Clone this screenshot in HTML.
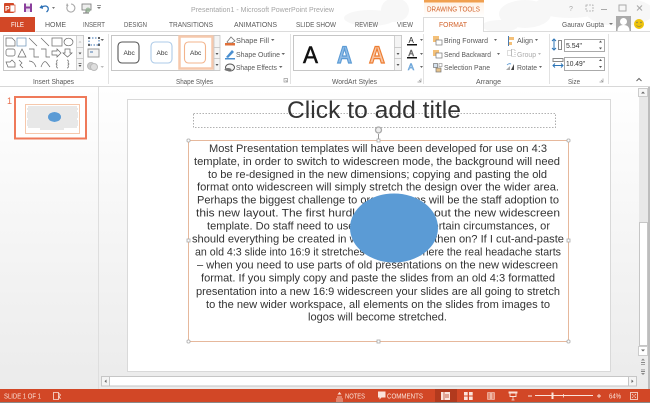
<!DOCTYPE html>
<html><head><meta charset="utf-8"><style>
html,body{margin:0;padding:0;background:#fff;width:650px;height:403px;overflow:hidden}
svg{display:block;position:absolute;left:0;top:0}
text{font-family:"Liberation Sans",sans-serif}
.t{font-size:7.6px;fill:#5a5a5a}
.b{font-size:11.2px;fill:#333}
</style></head><body>
<svg width="650" height="403" viewBox="0 0 650 403" xmlns="http://www.w3.org/2000/svg">
<defs><linearGradient id="bg" x1="0" y1="0" x2="0" y2="1"><stop offset="0" stop-color="#fff"/><stop offset="1" stop-color="#ebebeb"/></linearGradient>
<linearGradient id="tab" x1="0" y1="0" x2="0" y2="1"><stop offset="0" stop-color="#fff0e2"/><stop offset="1" stop-color="#fff"/></linearGradient></defs>
<rect width="650" height="403" fill="#fff"/>
<!-- cloud pattern -->
<g fill="#f7f7f7"><ellipse cx="370" cy="18" rx="26" ry="8"/><ellipse cx="395" cy="10" rx="14" ry="12"/><ellipse cx="525" cy="14" rx="26" ry="14"/><ellipse cx="570" cy="6" rx="36" ry="12"/><ellipse cx="620" cy="12" rx="34" ry="14"/><ellipse cx="500" cy="26" rx="18" ry="6"/></g>
<!-- QAT -->
<rect x="4" y="3" width="10" height="10" rx="1" fill="#d24726"/><rect x="10" y="5" width="5" height="7" fill="#fff" stroke="#d24726" stroke-width=".7"/><text x="5" y="11" font-size="7" font-weight="bold" fill="#fff">P</text>
<rect x="24" y="3.5" width="8" height="8.5" fill="#8a3f9c"/><rect x="26" y="3.5" width="4" height="3" fill="#eee"/><rect x="26" y="8.5" width="4" height="3.5" fill="#e8d8ee"/>
<path d="M42 5.5 l-1.5 2 2.5 .8 M41 7.5 q5 -3 7 0 q1 2.500 -1.500 4.500" fill="none" stroke="#2b6fb5" stroke-width="1.300"/><path d="M52 7h3l-1.500 2z" fill="#777"/>
<path d="M71 4a4 4 0 1 1 -3 1.200" fill="none" stroke="#aaa" stroke-width="1.100"/><path d="M67 3l1.500 2.500-2.500 .5z" fill="#aaa"/>
<rect x="82" y="4" width="9" height="6" fill="#eee" stroke="#777" stroke-width=".8"/><path d="M86 10v3M83 13h6" stroke="#777"/><circle cx="88" cy="10" r="2.500" fill="#8a8" opacity=".7"/>
<path d="M97 7h4l-2 2z M97 5h4v.7h-4z" fill="#777"/>
<text x="191" y="12" font-size="7.6" fill="#a5a5a5" textLength="143" lengthAdjust="spacingAndGlyphs">Presentation1 - Microsoft PowerPoint Preview</text>
<!-- drawing tools -->
<rect x="424" y="0" width="60" height="17" fill="url(#tab)"/><rect x="424" y="0" width="60" height="2.500" fill="#f0a050"/>
<text x="427" y="11.500" font-size="7.6" fill="#d2622a" textLength="53" lengthAdjust="spacingAndGlyphs">DRAWING TOOLS</text>
<!-- window controls -->
<text x="569" y="11" font-size="7" fill="#aaa">?</text>
<rect x="586" y="5" width="7" height="6" fill="none" stroke="#aaa" stroke-width=".8" stroke-dasharray="2 1"/>
<rect x="601" y="9" width="6" height="1" fill="#aaa"/><rect x="619" y="5" width="7" height="6" fill="none" stroke="#aaa"/>
<path d="M637 5.500l5 5M642 5.500l-5 5" stroke="#aaa" stroke-width="1.100"/>
<!-- tabs -->
<rect x="0" y="17" width="35" height="15" fill="#d24726"/>
<text x="11" y="27" font-size="7.6" fill="#fff" textLength="13" lengthAdjust="spacingAndGlyphs">FILE</text>
<g>
<text class="t" x="45" y="27" textLength="21" lengthAdjust="spacingAndGlyphs">HOME</text>
<text class="t" x="83" y="27" textLength="22" lengthAdjust="spacingAndGlyphs">INSERT</text>
<text class="t" x="124" y="27" textLength="23" lengthAdjust="spacingAndGlyphs">DESIGN</text>
<text class="t" x="169" y="27" textLength="44" lengthAdjust="spacingAndGlyphs">TRANSITIONS</text>
<text class="t" x="234" y="27" textLength="43" lengthAdjust="spacingAndGlyphs">ANIMATIONS</text>
<text class="t" x="296" y="27" textLength="40" lengthAdjust="spacingAndGlyphs">SLIDE SHOW</text>
<text class="t" x="355" y="27" textLength="23" lengthAdjust="spacingAndGlyphs">REVIEW</text>
<text class="t" x="397" y="27" textLength="16" lengthAdjust="spacingAndGlyphs">VIEW</text>
</g>
<path d="M35.500 31.500H423.500V17.500H483.500V31.500H650" fill="none" stroke="#dcdcdc"/>
<rect x="424" y="18" width="59" height="15" fill="#fff"/>
<text x="439" y="27" font-size="7.6" fill="#d2622a" textLength="28" lengthAdjust="spacingAndGlyphs">FORMAT</text>
<text x="562" y="27" class="t" textLength="42" lengthAdjust="spacingAndGlyphs">Gaurav Gupta</text><path d="M609 23h4l-2 2z" fill="#777"/>
<rect x="616" y="16" width="15" height="15" fill="#aaa"/><circle cx="623.500" cy="21.500" r="3.500" fill="#fff"/><path d="M617.500 31q0-6 6-6t6 6z" fill="#fff"/>
<circle cx="639" cy="24" r="5" fill="#eec30a"/><circle cx="637" cy="22.500" r=".7" fill="#775"/><circle cx="641" cy="22.500" r=".7" fill="#775"/><path d="M636.500 25.500q2.500 2 5 0" fill="none" stroke="#775" stroke-width=".6"/>
<!-- Insert shapes gallery -->
<rect x="3.500" y="35.500" width="80" height="35" fill="#fff" stroke="#c6c6c6"/>
<g fill="none" stroke="#666" stroke-width=".7">
<path d="M6 38h6l3 3v5H6z"/><rect x="17" y="38" width="9" height="8" stroke="#6a8fb5"/>
<path d="M29 38l8 8M41 38l8 8"/><rect x="52" y="38" width="10" height="8"/><ellipse cx="68.500" cy="42" rx="4.500" ry="3.800"/>
<rect x="6" y="49" width="9" height="7" rx="2"/><path d="M18 57l4-8 4 8z"/><path d="M29 49h5v8h5M41 49h5v8h4"/><path d="M52 51h5v-2l4 4-4 4v-2h-5z"/><path d="M65 49h5v4h2l-4.500 4-4.500-4h2z"/>
<path d="M6 62h4l2-2 3 3v4H8z"/><path d="M19 60l3 3-2 2 3 3"/><path d="M29 61q5 0 7 6"/><path d="M41 67q3-8 6-4t3 4"/><path d="M58 60q-2 0-1 3l-1 1 1 1q-1 3 1 3"/><path d="M67 60q2 0 1 3l1 1-1 1q1 3-1 3"/>
</g>
<g fill="#f4f4f4" stroke="#c6c6c6" stroke-width=".8"><rect x="76.500" y="35.500" width="7" height="12"/><rect x="76.500" y="47.500" width="7" height="11"/><rect x="76.500" y="58.500" width="7" height="12"/></g>
<path d="M78.500 42.500h3l-1.500-1.500z" fill="#bbb"/><path d="M78.500 52.500h3l-1.500 2z" fill="#555"/><path d="M78.500 63h3v.7h-3zM78.500 65h3l-1.500 2z" fill="#555"/>
<rect x="89" y="38" width="10" height="7" fill="none" stroke="#3a70b0" stroke-dasharray="1.500 1.500"/><circle cx="89" cy="38" r="1" fill="#333"/><circle cx="99" cy="38" r="1" fill="#333"/><circle cx="89" cy="45" r="1" fill="#333"/><circle cx="99" cy="45" r="1" fill="#333"/><path d="M100.500 39h3.500l-1.750 2z" fill="#666"/>
<rect x="88" y="49" width="11" height="8" fill="#f3f3f3" stroke="#999"/><path d="M90 52h3" stroke="#4a7ab0"/>
<circle cx="91" cy="66" r="3.500" fill="#ccc" stroke="#bbb"/><circle cx="94" cy="67" r="3.500" fill="#ddd" stroke="#bbb"/>
<path d="M100.500 66h3.500l-1.750 2z" fill="#bbb"/>
<text x="33" y="84" class="t" textLength="41" lengthAdjust="spacingAndGlyphs">Insert Shapes</text>
<path d="M108.500 34v50M290.500 34v50M423.500 34v50M549.500 34v50M608.500 34v50" stroke="#e2e2e2"/>
<!-- Shape styles -->
<rect x="111.500" y="35.500" width="108" height="35" fill="#fff" stroke="#c6c6c6"/>
<rect x="118" y="42" width="21" height="21" rx="4" fill="#fff" stroke="#555" stroke-width="1.100"/>
<rect x="151" y="42" width="21" height="21" rx="4" fill="#fff" stroke="#aecbe8" stroke-width="1.100"/>
<rect x="179.500" y="36.500" width="33" height="32" fill="#fff" stroke="#f6c8ac" stroke-width="2.500"/>
<rect x="184.500" y="42" width="21" height="21" rx="4" fill="#fff" stroke="#f3b48c" stroke-width="1.100"/>
<g fill="#333"><text x="123.500" y="55" font-size="6.500">Abc</text><text x="156.500" y="55" font-size="6.500">Abc</text><text x="190" y="55" font-size="6.500">Abc</text></g>
<g fill="#f4f4f4" stroke="#c6c6c6" stroke-width=".8"><rect x="214" y="35.500" width="6" height="12"/><rect x="214" y="47.500" width="6" height="11"/><rect x="214" y="58.500" width="6" height="12"/></g>
<path d="M215.500 53h3l-1.500 2z M215.500 64h3l-1.500 2z" fill="#555"/>
<path d="M227 42l4-5 4 4-3 2h-4z" fill="#fff" stroke="#777" stroke-width=".8"/><rect x="225" y="43" width="10" height="2.500" fill="#e0703a"/>
<path d="M226 57l6-7 2 2-6 6z" fill="#4a8fd0"/><rect x="225" y="58" width="10" height="1.500" fill="#4a8fd0"/>
<ellipse cx="230" cy="67.500" rx="4.500" ry="3.500" fill="#f6f6f6" stroke="#555"/><ellipse cx="228" cy="69.500" rx="3.500" ry="1.500" fill="#777"/>
<text x="236" y="43" class="t" textLength="33" lengthAdjust="spacingAndGlyphs">Shape Fill</text><path d="M271 39h3.500l-1.750 2z" fill="#666"/>
<text x="236" y="57" class="t" textLength="44" lengthAdjust="spacingAndGlyphs">Shape Outline</text><path d="M281.500 53h3.500l-1.750 2z" fill="#666"/>
<text x="236" y="70" class="t" textLength="41" lengthAdjust="spacingAndGlyphs">Shape Effects</text><path d="M279 66h3.500l-1.750 2z" fill="#666"/>
<text x="176" y="84" class="t" textLength="37" lengthAdjust="spacingAndGlyphs">Shape Styles</text>
<path d="M284 78.500h3.500v3.500h-3.500zM285.500 80l2 2" fill="none" stroke="#999" stroke-width=".7"/>
<!-- WordArt -->
<rect x="293.500" y="35.500" width="108" height="35" fill="#fff" stroke="#c6c6c6"/>
<text x="303" y="63" font-size="24" fill="#111" stroke="#111" stroke-width=".5" textLength="15" lengthAdjust="spacingAndGlyphs">A</text>
<text x="337" y="63" font-size="24" fill="#8fbbe6" stroke="#5b9bd5" stroke-width="1.200" font-weight="bold" textLength="15" lengthAdjust="spacingAndGlyphs">A</text>
<text x="369" y="63" font-size="24" fill="#f8c4a2" stroke="#ed7d31" stroke-width="1.200" font-weight="bold" textLength="16" lengthAdjust="spacingAndGlyphs">A</text>
<g fill="#f4f4f4" stroke="#c6c6c6" stroke-width=".8"><rect x="394.500" y="35.500" width="7" height="12"/><rect x="394.500" y="47.500" width="7" height="11"/><rect x="394.500" y="58.500" width="7" height="12"/></g>
<path d="M396.500 53h3l-1.500 2z M396.500 64h3l-1.500 2z" fill="#555"/>
<text x="408.500" y="43" font-size="8" fill="#222">A</text><rect x="407" y="44" width="10" height="1.500" fill="#111"/>
<text x="408.500" y="56" font-size="8" fill="#fff" stroke="#666" stroke-width=".6">A</text><rect x="407" y="57" width="10" height="1.500" fill="#111"/>
<text x="408" y="70" font-size="9" fill="#dbe8f5" stroke="#5b9bd5" stroke-width=".6">A</text>
<path d="M420 39h3l-1.500 2zM420 53h3l-1.500 2zM420 66h3l-1.500 2z" fill="#666"/>
<text x="332" y="84" class="t" textLength="45" lengthAdjust="spacingAndGlyphs">WordArt Styles</text>
<path d="M421 78.500v3.500h-3.500M419 80l2 2" fill="none" stroke="#999" stroke-width=".7"/>
<!-- Arrange -->
<rect x="433" y="36" width="6" height="6" fill="#f4c078"/><rect x="436" y="40" width="6" height="5" fill="#fff" stroke="#777" stroke-width=".7"/>
<rect x="433" y="50" width="6" height="6" fill="#f4c078"/><rect x="436" y="53" width="6" height="5" fill="#fff" stroke="#777" stroke-width=".7"/>
<rect x="433.500" y="63.500" width="4" height="4" fill="#d5e2ee" stroke="#777" stroke-width=".7"/><rect x="439" y="63.500" width="3" height="3" fill="none" stroke="#999" stroke-width=".7"/><rect x="436" y="68" width="5" height="4" fill="#e6c38c" stroke="#777" stroke-width=".7"/>
<text x="444" y="43" class="t" textLength="44" lengthAdjust="spacingAndGlyphs">Bring Forward</text><path d="M494 39h3l-1.500 2z" fill="#666"/>
<text x="444" y="57" class="t" textLength="47" lengthAdjust="spacingAndGlyphs">Send Backward</text><path d="M497 53h3l-1.500 2z" fill="#666"/>
<text x="444" y="70" class="t" textLength="46" lengthAdjust="spacingAndGlyphs">Selection Pane</text>
<path d="M508.500 36v10" stroke="#4a7ab0"/><rect x="509" y="37" width="5" height="3" fill="#f4c078"/><rect x="509" y="42" width="3" height="3" fill="#f4c078"/>
<text x="517" y="43" class="t" textLength="16" lengthAdjust="spacingAndGlyphs">Align</text><path d="M535 39h3l-1.500 2z" fill="#666"/>
<rect x="507.500" y="50.500" width="4" height="5" fill="none" stroke="#bbb" stroke-dasharray="1 1"/><rect x="511.500" y="49.500" width="3.500" height="7" fill="none" stroke="#bbb" stroke-dasharray="1 1"/>
<text x="517" y="57" font-size="7.6" fill="#aaa" textLength="19" lengthAdjust="spacingAndGlyphs">Group</text><path d="M538 53h3l-1.500 2z" fill="#bbb"/>
<path d="M506 70l4-4v4z" fill="#aaa"/><path d="M511 70l3-6v6z" fill="#444"/><path d="M507 65q2-2 4-1" fill="none" stroke="#4a8fd0" stroke-width=".8"/>
<text x="517" y="70" class="t" textLength="20" lengthAdjust="spacingAndGlyphs">Rotate</text><path d="M539 66h3l-1.500 2z" fill="#666"/>
<text x="476" y="84" class="t" textLength="25" lengthAdjust="spacingAndGlyphs">Arrange</text>
<!-- Size -->
<path d="M554 39v11M552 41l2-2 2 2M552 48l2 2 2-2" fill="none" stroke="#2e75b6"/><rect x="558.500" y="40.500" width="3" height="9" fill="#fff" stroke="#888"/>
<rect x="553" y="58.500" width="10" height="3" fill="#fff" stroke="#888"/><path d="M553 65.500h10M555 63.500l-2 2 2 2M561 63.500l2 2-2 2" fill="none" stroke="#2e75b6"/>
<rect x="564.500" y="39.500" width="40" height="12" fill="#fff" stroke="#aaa"/><rect x="564.500" y="57.500" width="40" height="13" fill="#fff" stroke="#aaa"/>
<text x="566" y="48" font-size="7.6" fill="#333" textLength="16" lengthAdjust="spacingAndGlyphs">5.54"</text>
<text x="566" y="66" font-size="7.6" fill="#333" textLength="19" lengthAdjust="spacingAndGlyphs">10.49"</text>
<path d="M599 42.500h3l-1.500-2zM599 47.500h3l-1.500 2zM599 61h3l-1.500-2zM599 66h3l-1.500 2z" fill="#555"/>
<text x="568" y="84" class="t" textLength="12" lengthAdjust="spacingAndGlyphs">Size</text>
<path d="M603 78.500v3.500h-3.500M601 80l2 2" fill="none" stroke="#999" stroke-width=".7"/>
<path d="M636.500 81l2.500-2.500 2.500 2.500" fill="none" stroke="#666"/>
<!-- Workspace -->
<rect x="0" y="87" width="650" height="302" fill="url(#bg)"/>
<rect x="0" y="86" width="650" height="1" fill="#d8d8d8"/>
<rect x="98" y="87" width="1" height="302" fill="#dedede"/>
<!-- Thumbnail -->
<text x="7" y="104" font-size="9" fill="#e8704f">1</text>
<rect x="15" y="97" width="71" height="41.500" fill="#fff" stroke="#ef7a5a" stroke-width="2"/>
<rect x="25.500" y="104.500" width="54" height="29" fill="#fff" stroke="#f6c8ac"/>
<g stroke="#c4c4c4" stroke-width=".7"><path d="M28 107h49M27 109h51M28 111h49M27 113h51M27 115h51M27 117h51M28 119h49M27 121h51M27 123h51M27 125h51M28 127h49M40 129h24"/></g>
<ellipse cx="54.500" cy="117" rx="6.500" ry="5" fill="#5b9bd5"/>
<!-- Slide -->
<rect x="127.500" y="99.500" width="483" height="272" fill="#fff" stroke="#d9d9d9"/>
<rect x="193.500" y="113.500" width="362" height="14" fill="none" stroke="#999" stroke-width=".8" stroke-dasharray="1.500 1.500"/>
<text x="287" y="118" font-size="24.500" fill="#333" textLength="174" lengthAdjust="spacingAndGlyphs">Click to add title</text>
<rect x="188.500" y="140.500" width="380" height="201" fill="#fff" stroke="#e6b89c"/>
<path d="M378.500 134v6" stroke="#999"/>
<circle cx="378.500" cy="130" r="3" fill="#eee" stroke="#aaa" stroke-width="1.300"/>
<g>
<text class="b" x="209" y="152" textLength="338" lengthAdjust="spacingAndGlyphs">Most Presentation templates will have been developed for use on 4:3</text>
<text class="b" x="194" y="165" textLength="366" lengthAdjust="spacingAndGlyphs">template, in order to switch to widescreen mode, the background will need</text>
<text class="b" x="208" y="178" textLength="339" lengthAdjust="spacingAndGlyphs">to be re-designed in the new dimensions; copying and pasting the old</text>
<text class="b" x="197" y="190.500" textLength="362" lengthAdjust="spacingAndGlyphs">format onto widescreen will simply stretch the design over the wider area.</text>
<text class="b" x="197" y="203.500" textLength="362" lengthAdjust="spacingAndGlyphs">Perhaps the biggest challenge to organizations will be the staff adoption to</text>
<text class="b" x="196" y="216.500" textLength="364" lengthAdjust="spacingAndGlyphs">this new layout. The first hurdle will be to roll out the new widescreen</text>
<text class="b" x="207" y="229.500" textLength="343" lengthAdjust="spacingAndGlyphs">template. Do staff need to use the old one in certain circumstances, or</text>
<text class="b" x="192" y="242.500" textLength="372" lengthAdjust="spacingAndGlyphs">should everything be created in widescreen from then on? If I cut-and-paste</text>
<text class="b" x="195" y="255.500" textLength="366" lengthAdjust="spacingAndGlyphs">an old 4:3 slide into 16:9 it stretches it – this is where the real headache starts</text>
<text class="b" x="197" y="268.500" textLength="361" lengthAdjust="spacingAndGlyphs">– when you need to use parts of old presentations on the new widescreen</text>
<text class="b" x="201" y="281.500" textLength="354" lengthAdjust="spacingAndGlyphs">format. If you simply copy and paste the slides from an old 4:3 formatted</text>
<text class="b" x="196" y="295" textLength="364" lengthAdjust="spacingAndGlyphs">presentation into a new 16:9 widescreen your slides are all going to stretch</text>
<text class="b" x="206" y="308" textLength="344" lengthAdjust="spacingAndGlyphs">to the new wider workspace, all elements on the slides from images to</text>
<text class="b" x="308" y="320.500" textLength="139" lengthAdjust="spacingAndGlyphs">logos will become stretched.</text>
</g>
<ellipse cx="394" cy="228" rx="44" ry="34.500" fill="#5b9bd5"/>
<g fill="#fff" stroke="#a8a8a8" stroke-width=".8">
<rect x="187" y="139" width="3" height="3" rx="1"/><rect x="377" y="139" width="3" height="3"/><rect x="567" y="139" width="3" height="3" rx="1"/>
<rect x="187" y="239" width="3" height="3"/><rect x="567" y="239" width="3" height="3"/>
<rect x="187" y="340" width="3" height="3" rx="1"/><rect x="377" y="340" width="3" height="3"/><rect x="567" y="340" width="3" height="3" rx="1"/>
</g>
<!-- Scrollbars -->
<rect x="101.500" y="376.500" width="535" height="9.500" fill="#fff" stroke="#c6c6c6"/>
<rect x="101.500" y="376.500" width="8" height="9.500" fill="#f4f4f4" stroke="#c6c6c6"/>
<rect x="628.500" y="376.500" width="8" height="9.500" fill="#f4f4f4" stroke="#c6c6c6"/>
<path d="M106.500 379.500v3.500l-2-1.750zM631.500 379.500v3.500l2-1.750z" fill="#666"/>
<rect x="639" y="96" width="9" height="126" fill="#e8e8e8"/>
<rect x="638.500" y="88.500" width="9" height="8" fill="#f6f6f6" stroke="#ccc"/>
<rect x="639.500" y="222.500" width="8" height="123" fill="#fff" stroke="#c6c6c6"/>
<rect x="638.500" y="346.500" width="9" height="9" fill="#fff" stroke="#ccc"/>
<path d="M641 93.500h4l-2-2zM641 349.500h4l-2 2z" fill="#666"/>
<path d="M641 360.500h4l-2-2zM641 362h4v1h-4zM641 364h4v.7h-4zM641 369.500h4v.7h-4zM641 371h4v1h-4zM641 373h4l-2 2z" fill="#888"/>
<rect x="648" y="87" width="2" height="302" fill="#bdbdbd"/>
<!-- Status bar -->
<rect x="0" y="389" width="650" height="13" fill="#d24726"/>
<rect x="0" y="402" width="650" height="1" fill="#8a8a8a"/>
<text x="4" y="398.500" font-size="7.2" fill="#fbe3da" textLength="37" lengthAdjust="spacingAndGlyphs">SLIDE 1 OF 1</text>
<path d="M53.500 392.500h5v7h-5zM58.500 393l2 2-1.500 1.500 1.500 2.500" fill="none" stroke="#fbe3da" stroke-width=".8"/>
<path d="M337 397h5M336 399h7M336 401h7" stroke="#fbe3da" stroke-width=".7"/><path d="M339.500 392l2 2.500h-4z" fill="#fbe3da"/>
<text x="345" y="398.500" font-size="7.2" fill="#fbe3da" textLength="20" lengthAdjust="spacingAndGlyphs">NOTES</text>
<path d="M378 391.500h7.500v6h-4l-2 2v-2h-1.500z" fill="#fbe3da"/>
<text x="387" y="398.500" font-size="7.2" fill="#fbe3da" textLength="36" lengthAdjust="spacingAndGlyphs">COMMENTS</text>
<rect x="435" y="389" width="22" height="13" fill="#b23a1e"/>
<rect x="441" y="392" width="9" height="8" fill="#fbe3da"/><path d="M444 392v8M445 395h4M445 397h4" stroke="#b23a1e" stroke-width=".7"/>
<g fill="#fbe3da"><rect x="464" y="392" width="3.700" height="3.500"/><rect x="469" y="392" width="3.700" height="3.500"/><rect x="464" y="396.500" width="3.700" height="3.500"/><rect x="469" y="396.500" width="3.700" height="3.500"/></g>
<path d="M487.500 392.500h3.200v7h-3.200zM491.300 392.500h3.200v7h-3.200z" fill="#e68d74" stroke="#fbe3da" stroke-width=".5"/>
<path d="M509 392h8v1h-8zM510 393h6v3.500h-6z" fill="none" stroke="#fbe3da" stroke-width=".9"/><path d="M513 397v3M511.500 400h3" stroke="#fbe3da" stroke-width=".8"/>
<path d="M528 396h4M535 395.500h58M597 396h4M599 394v4" stroke="#fbe3da" stroke-width=".9"/>
<rect x="551.500" y="392.500" width="2" height="6.500" fill="#fbe3da"/><rect x="563" y="394" width=".8" height="3.500" fill="#fbe3da"/>
<text x="609" y="398.500" font-size="7.2" fill="#fbe3da" textLength="12" lengthAdjust="spacingAndGlyphs">64%</text>
<rect x="630.500" y="392.500" width="7" height="7" fill="none" stroke="#fbe3da" stroke-width=".8"/><path d="M632 394l1.500 1.500M636 394l-1.500 1.500M632 398l1.500-1.500M636 398l-1.500-1.500" stroke="#fbe3da" stroke-width=".7"/>
</svg>
</body></html>
